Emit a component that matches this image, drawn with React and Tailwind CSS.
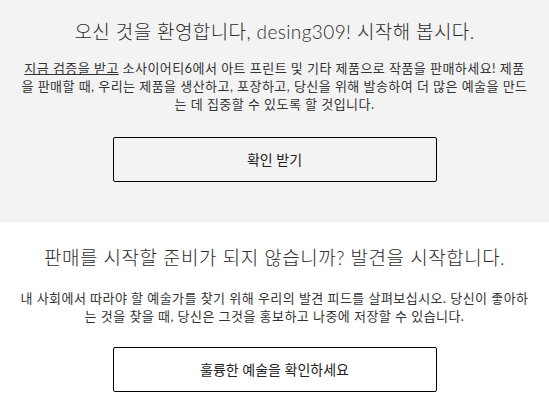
import React from "react";

const font = {
  fontFamily: '"Lato", "Noto Sans CJK KR", sans-serif',
};

const App = () => {
  return (
    <div className="min-h-[403px] bg-white text-[#333]" style={font}>
      {/* welcome */}
      <section className="bg-[#f3f3f3] px-5 pt-[18px] pb-10 flex flex-col items-center text-center">
        <h1 className="text-[19px] leading-[28px] font-light tracking-[0.4px] text-[#2b2b2b]">
          오신 것을 환영합니다, desing309! 시작해 봅시다.
        </h1>
        <p className="mt-[13px] text-[13px] leading-[18px] tracking-[0.45px] max-w-[509px]">
          <a href="#" className="underline">지금 검증을 받고</a> 소사이어티6에서 아트 프린트 및 기타 제품으로 작품을 판매하세요! 제품을 판매할 때, 우리는 제품을 생산하고, 포장하고, 당신을 위해 발송하여 더 많은 예술을 만드는 데 집중할 수 있도록 할 것입니다.
        </p>
        <button className="mt-6 w-[324px] h-[45px] border border-black rounded-[2px] text-[14px] text-[#222]">
          확인 받기
        </button>
      </section>

      {/* discover */}
      <section className="px-5 pt-[22px] pb-3 flex flex-col items-center text-center">
        <h2 className="text-[19px] leading-[28px] font-light tracking-[0.5px] text-[#2b2b2b]">
          판매를 시작할 준비가 되지 않습니까? 발견을 시작합니다.
        </h2>
        <p className="mt-[17px] text-[13px] leading-[18px] tracking-[0.45px] max-w-[509px]">
          내 사회에서 따라야 할 예술가를 찾기 위해 우리의 발견 피드를 살펴보십시오. 당신이 좋아하는 것을 찾을 때, 당신은 그것을 홍보하고 나중에 저장할 수 있습니다.
        </p>
        <button className="mt-[22px] w-[324px] h-[45px] border border-black rounded-[2px] text-[14px] text-[#222]">
          훌륭한 예술을 확인하세요
        </button>
      </section>
    </div>
  );
};

export default App;
